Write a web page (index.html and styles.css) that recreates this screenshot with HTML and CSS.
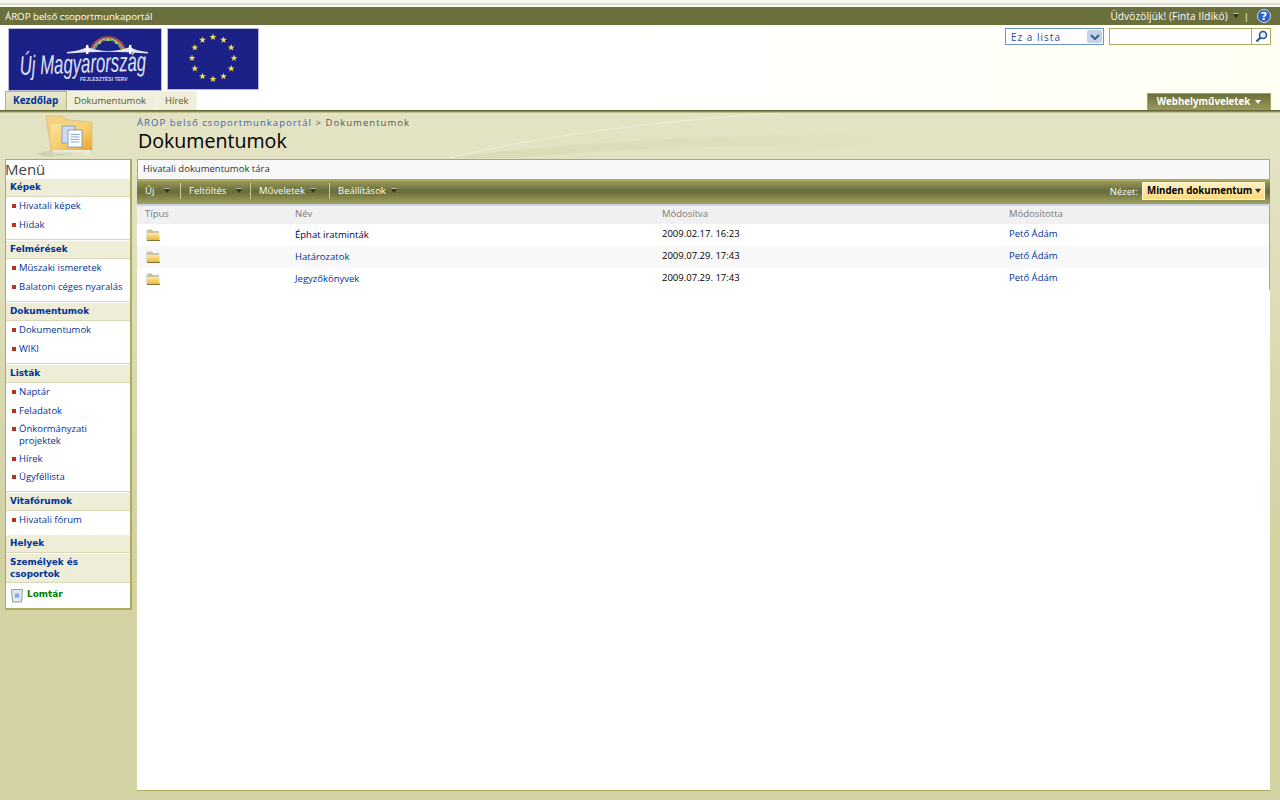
FILE: index.html
```html
<!DOCTYPE html>
<html lang="hu">
<head>
<meta charset="utf-8">
<title>Dokumentumok</title>
<link rel="stylesheet" href="styles.css">
</head>
<body>
<div class="topstripe"></div>
<div class="globalbar">
  <span class="sitename">ÁROP belső csoportmunkaportál</span>
  <div class="globalright">
    <span class="welcome">Üdvözöljük! (Finta Ildikó)</span><i class="caret"></i><span class="pipe">|</span>
    <svg class="help" width="14" height="14" viewBox="0 0 14 14"><circle cx="7" cy="7" r="6.5" fill="#2a62c4" stroke="#cfe0f5"/><path d="M3 5Q7 0 11 5Q7 3 3 5Z" fill="#8fb4ea"/><text x="7" y="10.5" text-anchor="middle" class="helpq">?</text></svg>
  </div>
</div>
<header class="banner">
  <div class="logos">
    <svg class="logo" width="154" height="63" viewBox="0 0 154 63">
      <rect x="0.5" y="0.5" width="153" height="62" fill="#1c2188" stroke="#b9bad8"/>
      <path d="M83 21a18 18 0 0 1 34 0" fill="none" stroke="#d8503c" stroke-width="1.3"/>
      <path d="M85 21a16 16 0 0 1 30 0" fill="none" stroke="#e8d060" stroke-width="1.3"/>
      <path d="M87 21a14 14 0 0 1 26 0" fill="none" stroke="#5fae6c" stroke-width="1.3"/>
      <g fill="#f2e24a"><circle cx="92" cy="15" r="1"/><circle cx="100" cy="12" r="1"/><circle cx="108" cy="15" r="1"/></g>
      <path d="M59 24Q72 23 79 19Q100 27 122 19Q128 23 140 24L140 25.5Q100 22 59 25.5Z" fill="#e4e6f4"/>
      <path d="M78 17h2.400v9h-2.400zM121 17h2.400v9h-2.400z" fill="#fff"/>
      <g transform="translate(12 47) rotate(-2) scale(0.93 1.5)">
        <text x="0" y="0" class="logot">Új Magyarország</text>
      </g>
      <text x="72" y="52.500" class="logosub">FEJLESZTÉSI TERV</text>
    </svg>
    <svg class="logo" width="92" height="62" viewBox="0 0 92 62">
      <defs><polygon id="s" points="0,-3.4 0.9,-1 3.4,-1 1.4,0.500 2.100,3 0,1.600 -2.100,3 -1.400,0.500 -3.400,-1 -0.900,-1"/></defs>
      <rect x="0.5" y="0.5" width="91" height="61" fill="#1c2188" stroke="#b9bad8"/>
      <g fill="#f2e24a">
        <use href="#s" x="46" y="9"/><use href="#s" x="56.500" y="11.800"/><use href="#s" x="64.200" y="19.500"/><use href="#s" x="67" y="30"/><use href="#s" x="64.200" y="40.500"/><use href="#s" x="56.500" y="48.200"/><use href="#s" x="46" y="51"/><use href="#s" x="35.500" y="48.200"/><use href="#s" x="27.800" y="40.500"/><use href="#s" x="25" y="30"/><use href="#s" x="27.800" y="19.500"/><use href="#s" x="35.500" y="11.800"/>
      </g>
    </svg>
  </div>
  <div class="searchbox">
    <div class="scope"><span>Ez a lista</span><b class="scopebtn"><svg width="10" height="6" viewBox="0 0 10 6"><path d="M1 1l4 4 4-4" fill="none" stroke="#3e5a8c" stroke-width="2"/></svg></b></div>
    <div class="sinput"></div>
    <div class="sgo"><svg width="13" height="13" viewBox="0 0 13 13"><circle cx="8" cy="5" r="3.5" fill="#e8f0fb" stroke="#24509c" stroke-width="1.6"/><path d="M5.500 7.500L1.500 11.500" stroke="#24509c" stroke-width="2.200"/></svg></div>
  </div>
  <nav class="tabs">
    <a class="tab active">Kezdőlap</a><a class="tab tabdoc">Dokumentumok</a><a class="tab tabnews">Hírek</a>
  </nav>
  <a class="siteact">Webhelyműveletek<i class="caret light"></i></a>
</header>
<div class="rule"></div>
<div class="titlearea">
  <div class="bigfolder">
    <svg width="60" height="46" viewBox="0 0 60 46">
      <defs>
        <linearGradient id="ff" x1="0" y1="0" x2="1" y2="1"><stop offset="0" stop-color="#fde69a"/><stop offset="0.55" stop-color="#f6cb68"/><stop offset="1" stop-color="#e8a32a"/></linearGradient>
        <linearGradient id="fr" x1="0" y1="0" x2="0" y2="1"><stop offset="0" stop-color="#fff" stop-opacity="0.75"/><stop offset="1" stop-color="#fff" stop-opacity="0"/></linearGradient>
      </defs>
      <path d="M2 41L17 37H58V39L14 44Z" fill="#c9c9a6" opacity="0.7"/>
      <path d="M12 3H28L34 7L58 9V37H17Z" fill="#f3d285" stroke="#d8b56a" stroke-width="0.6"/>
      <rect x="17" y="11" width="41" height="26" fill="url(#ff)"/>
      <rect x="19" y="37" width="38" height="5" fill="url(#fr)"/>
      <rect x="28" y="13" width="13" height="17" fill="#cfdcf0" stroke="#8aa0c0"/>
      <rect x="34" y="17" width="14" height="17" fill="#fff" stroke="#8aa0c0"/>
      <path d="M36.500 21.500h9M36.500 24h9M36.500 26.500h9M36.500 29h9" stroke="#8aa8d8"/>
    </svg>
  </div>
  <div class="titletext">
    <div class="crumb"><a>ÁROP belső csoportmunkaportál</a> &gt; Dokumentumok</div>
    <h1>Dokumentumok</h1>
  </div>
  <svg class="swoosh" width="450" height="46" viewBox="0 0 450 46">
    <defs>
      <linearGradient id="sw" x1="0" y1="0" x2="1" y2="0"><stop offset="0" stop-color="#dbdbb7"/><stop offset="0.6" stop-color="#dedebc"/><stop offset="1" stop-color="#e3e3c3"/></linearGradient>
    </defs>
    <path d="M0 45Q150 23 440 20V34Q200 30 70 45Z" fill="url(#sw)"/>
    <path d="M0 45Q130 13 330 0" fill="none" stroke="#eeeedb" stroke-width="1"/>
  </svg>
</div>
<div class="body">
  <aside class="side">
    <div class="menutitle">Menü</div>
    <div class="shead">Képek</div>
    <ul><li>Hivatali képek</li><li>Hidak</li></ul>
    <div class="shead">Felmérések</div>
    <ul><li>Müszaki ismeretek</li><li>Balatoni céges nyaralás</li></ul>
    <div class="shead">Dokumentumok</div>
    <ul><li>Dokumentumok</li><li>WIKI</li></ul>
    <div class="shead">Listák</div>
    <ul class="short"><li>Naptár</li><li>Feladatok</li><li>Önkormányzati projektek</li><li>Hírek</li><li>Ügyféllista</li></ul>
    <div class="shead">Vitafórumok</div>
    <ul class="short"><li>Hivatali fórum</li></ul>
    <div class="shead gap">Helyek</div>
    <div class="shead two">Személyek és csoportok</div>
    <div class="trash">
      <svg width="14" height="15" viewBox="0 0 14 15"><path d="M1.500 1.500h11l-1 12.500h-9Z" fill="#dfe8f2" stroke="#8da0a8"/><rect x="5" y="5.500" width="4" height="4" fill="#7fa4e0"/></svg>
      <span>Lomtár</span>
    </div>
  </aside>
  <main class="content">
    <div class="libdesc">Hivatali dokumentumok tára</div>
    <div class="toolbar">
      <span class="tbtn w1">Új<i class="caret far"></i></span>
      <span class="tbtn w2">Feltöltés<i class="caret far"></i></span>
      <span class="tbtn w3">Műveletek<i class="caret"></i></span>
      <span class="tbtn w4">Beállítások<i class="caret"></i></span>
      <span class="viewlabel">Nézet:</span>
      <span class="viewsel">Minden dokumentum<i class="caret"></i></span>
    </div>
    <div class="grid head"><span>Típus</span><span>Név</span><span>Módosítva</span><span>Módosította</span></div>
    <div class="grid row">
      <span><svg class="fold" width="15" height="12" viewBox="0 0 15 12"><use href="#f"/></svg></span>
      <a class="dark">Éphat iratminták</a><span class="date">2009.02.17. 16:23</span><a class="date link">Pető Ádám</a>
    </div>
    <div class="grid row alt">
      <span><svg class="fold" width="15" height="12" viewBox="0 0 15 12"><use href="#f"/></svg></span>
      <a>Határozatok</a><span class="date">2009.07.29. 17:43</span><a class="date link">Pető Ádám</a>
    </div>
    <div class="grid row">
      <span><svg class="fold" width="15" height="12" viewBox="0 0 15 12"><use href="#f"/></svg></span>
      <a>Jegyzőkönyvek</a><span class="date">2009.07.29. 17:43</span><a class="date link">Pető Ádám</a>
    </div>
  </main>
</div>
<svg width="0" height="0" class="defs"><defs>
  <linearGradient id="sf" x1="0" y1="0" x2="0" y2="1"><stop offset="0" stop-color="#fdeca6"/><stop offset="1" stop-color="#eeb63a"/></linearGradient>
  <g id="f"><path d="M0.500 11V1.500L1.500 0.500H6L7 2H13V11Z" fill="#c9c3a8"/><path d="M1 4H13.500V11H1Z" fill="url(#sf)"/><path d="M1 11H14V12H1Z" fill="#8a7330"/></g>
</defs></svg>
</body>
</html>
```
FILE: styles.css
```css
* { box-sizing: border-box; }
html, body { margin: 0; height: 800px; overflow: hidden; }
body {
  font-family: "Open Sans", "DejaVu Sans", sans-serif;
  font-size: 9.5px;
  color: #000;
  display: flex;
  flex-direction: column;
  background: #d2d2a3;
}
.defs { position: absolute; }
.topstripe {
  height: 7px;
  background: linear-gradient(#f6f5ec 0, #f6f5ec 3px, #dcdccb 3px, #dcdccb 5px, #fafaf4 5px);
}
.globalbar {
  height: 18px;
  background: #6b6f3c;
  color: #fff;
  display: flex;
  align-items: center;
  justify-content: space-between;
  padding: 0 9px 0 5px;
}
.sitename { font-size: 9.7px; }
.welcome { font-size: 10px; letter-spacing: 0.15px; }
.globalright { display: flex; align-items: center; }
.pipe { margin: 0 8px 0 5px; }
.help { display: block; }
.helpq { font: bold 11px "DejaVu Sans", sans-serif; fill: #fff; }
.caret {
  display: inline-block;
  width: 0;
  height: 0;
  margin-left: 5px;
  border: 3px solid transparent;
  border-top: 4px solid #33331f;
  border-bottom: 0;
  vertical-align: middle;
  filter: drop-shadow(0 -1px 0 #c4c4a8);
}
.caret.far { margin-left: 10px; }
.caret.light { border-top-color: #fff; margin-left: 5px; filter: none; }
.banner {
  position: relative;
  height: 85px;
  background: linear-gradient(90deg, #fff 0, #fff 50%, #fffff4 100%);
  display: grid;
  grid-template-columns: 1fr auto;
  grid-template-rows: 66px 19px;
}
.logos { display: flex; gap: 5px; padding: 3px 0 0 8px; align-items: flex-start; }
.logo { display: block; }
.logot { font: italic 18px "Liberation Sans", sans-serif; fill: #dfe2f3; }
.logosub { font: bold 5px "Liberation Sans", sans-serif; fill: #d8dcf2; }
.searchbox { display: flex; padding: 3px 9px 0 0; align-items: flex-start; }
.scope {
  width: 99px;
  height: 17px;
  border: 1px solid #6c94c4;
  background: #fff;
  color: #1f4f9c;
  margin-right: 5px;
  padding-left: 5px;
  display: flex;
  align-items: center;
  justify-content: space-between;
  font-size: 10px;
  letter-spacing: 1px;
}
.scopebtn {
  width: 15px;
  height: 13px;
  margin-right: 1px;
  border-radius: 2px;
  background: #c2d2ec;
  display: flex;
  align-items: center;
  justify-content: center;
}
.sinput { width: 143px; height: 17px; border: 1px solid #aeaa60; background: #fff; }
.sgo {
  width: 19px;
  height: 17px;
  border: 1px solid #aeaa60;
  border-left: 0;
  background: #fff;
  display: flex;
  align-items: center;
  justify-content: center;
}
.tabs { display: flex; padding-left: 5px; align-items: flex-end; }
.tab {
  height: 19px;
  line-height: 17px;
  padding-left: 6px;
  background: #efefda;
  border: 1px solid #f2f2e2;
  border-bottom: 0;
  color: #55582c;
}
.tabdoc { width: 90px; }
.tabnews { width: 40px; padding-left: 7px; }
.tab.active {
  width: 62px;
  padding-left: 7px;
  background: linear-gradient(#e8e8cc, #dcdcb6);
  border: 1px solid #b5b374;
  border-bottom: 0;
  color: #003399;
  font-size: 10px;
  font-weight: 700;
}
.siteact {
  align-self: end;
  justify-self: end;
  width: 124px;
  height: 17px;
  margin-right: 9px;
  border: 1px solid #a3a360;
  border-bottom: 0;
  background: linear-gradient(#6b6f3c, #9a9a58);
  color: #fff;
  font-size: 9.700px;
  font-weight: 700;
  text-align: center;
  line-height: 16px;
}
.rule {
  height: 3px;
  background: linear-gradient(#5d6037, #6b6f3c 1px, #a3a468 2px, #d8d8b0);
}
.titlearea {
  position: relative;
  height: 46px;
  background: #e3e3c3;
  display: flex;
}
.bigfolder { width: 137px; padding-left: 34px; }
.bigfolder svg { display: block; }
.titletext { position: relative; z-index: 1; }
.crumb { color: #555; letter-spacing: 1.05px; line-height: 19px; }
.crumb a { color: #3a5fc0; }
h1 { margin: -3px 0 0 1px; font-size: 19.600px; font-weight: 400; line-height: 24px; color: #000; }
.swoosh { position: absolute; left: 450px; top: 0; }
.body {
  flex: 1;
  display: flex;
  padding: 0 10px 9px 5px;
  background: linear-gradient(#e3e3c3, #d2d2a3 380px);
}
.side {
  width: 127px;
  height: 451px;
  margin-right: 5px;
  background: #fff;
  border: 1px solid #aeaa60;
  border-right-width: 2px;
  border-bottom-width: 2px;
}
.menutitle { font-size: 15px; line-height: 19px; color: #444; height: 19px; margin-left: -1px; }
.shead {
  height: 18px;
  background: #eeeed8;
  border-bottom: 1px solid #d8d8b8;
  font-family: "DejaVu Sans", sans-serif;
  font-size: 8.900px;
  color: #003399;
  font-weight: 700;
  padding: 0 3px 0 4px;
  line-height: 17px;
}
.shead.gap { margin-bottom: 1px; }
.shead.two { height: 29px; line-height: 12px; padding-top: 2px; }
.side ul {
  list-style: none;
  margin: 0 0 1px;
  padding: 3.250px 0 8.500px;
  border-bottom: 1px solid #d8d8b8;
}
.side ul.short { padding-bottom: 7.750px; }
.side ul:nth-of-type(5) { border-bottom: 0; padding-bottom: 8.750px; margin-bottom: 0; }
.side li {
  position: relative;
  color: #003399;
  padding: 0 0 0 13px;
  margin-top: 6.250px;
  line-height: 12px;
}
.side li:first-child { margin-top: 0; }
.side li::before {
  content: "";
  position: absolute;
  left: 6px;
  top: 4px;
  width: 4px;
  height: 4px;
  background: #b8321f;
}
.trash {
  display: flex;
  gap: 3px;
  padding: 5px 0 0 4px;
  align-items: flex-start;
  font-family: "DejaVu Sans", sans-serif;
  font-size: 8.900px;
  color: #008000;
  font-weight: 700;
  line-height: 12px;
}
.content {
  flex: 1;
  height: 632px;
  background: #fff;
  border-top: 1px solid #aeaa60;
  border-bottom: 1px solid #aeaa60;
}
.libdesc {
  height: 19px;
  line-height: 17px;
  padding-left: 5px;
  background: #f8f8f8;
  border-right: 1px solid #aeaa60;
  border-left: 1px solid #aeaa60;
  color: #333;
}
.toolbar {
  height: 25px;
  display: flex;
  align-items: center;
  color: #fff;
  border-top: 2px solid #aeaa60;
  background: linear-gradient(#9a9a58, #6b6f3c 40%, #6b6f3c 50%, #a3a360);
  padding: 0 5px 3px 0;
}
.tbtn { display: block; padding-left: 8px; border-right: 1px solid #c8c890; height: 16px; line-height: 16px; white-space: nowrap; }
.w1 { width: 44px; }
.w2 { width: 70px; }
.w3 { width: 79px; }
.w4 { width: 80px; border: 0; }
.viewlabel { margin-left: auto; margin-right: 4px; }
.viewsel {
  width: 123px;
  height: 18px;
  border: 1px solid #fff8d8;
  background: linear-gradient(#fff0c0, #ffd97f);
  color: #000;
  font-size: 9.700px;
  font-weight: 700;
  line-height: 16px;
  padding-left: 4px;
  white-space: nowrap;
}
.viewsel .caret { margin-left: 3px; }
.grid {
  display: grid;
  grid-template-columns: 150px 367px 347px 1fr;
  padding-left: 8px;
  border-right: 1px solid #aeaa60;
  align-items: center;
}
.grid.head {
  height: 20px;
  padding-bottom: 4px;
  background: #f0f0f0;
  border-top: 2px solid #c9d4e4;
  color: #7a7a7a;
}
.row { height: 22px; padding-bottom: 2px; }
.row.alt { background: #f8f8f8; }
.row a { color: #003399; }
.row a.dark { color: #000050; }
.date { color: #000; padding-bottom: 2px; }
.row a.link { color: #003399; }
.fold { display: block; margin: 2px 0 0 1px; }
```
